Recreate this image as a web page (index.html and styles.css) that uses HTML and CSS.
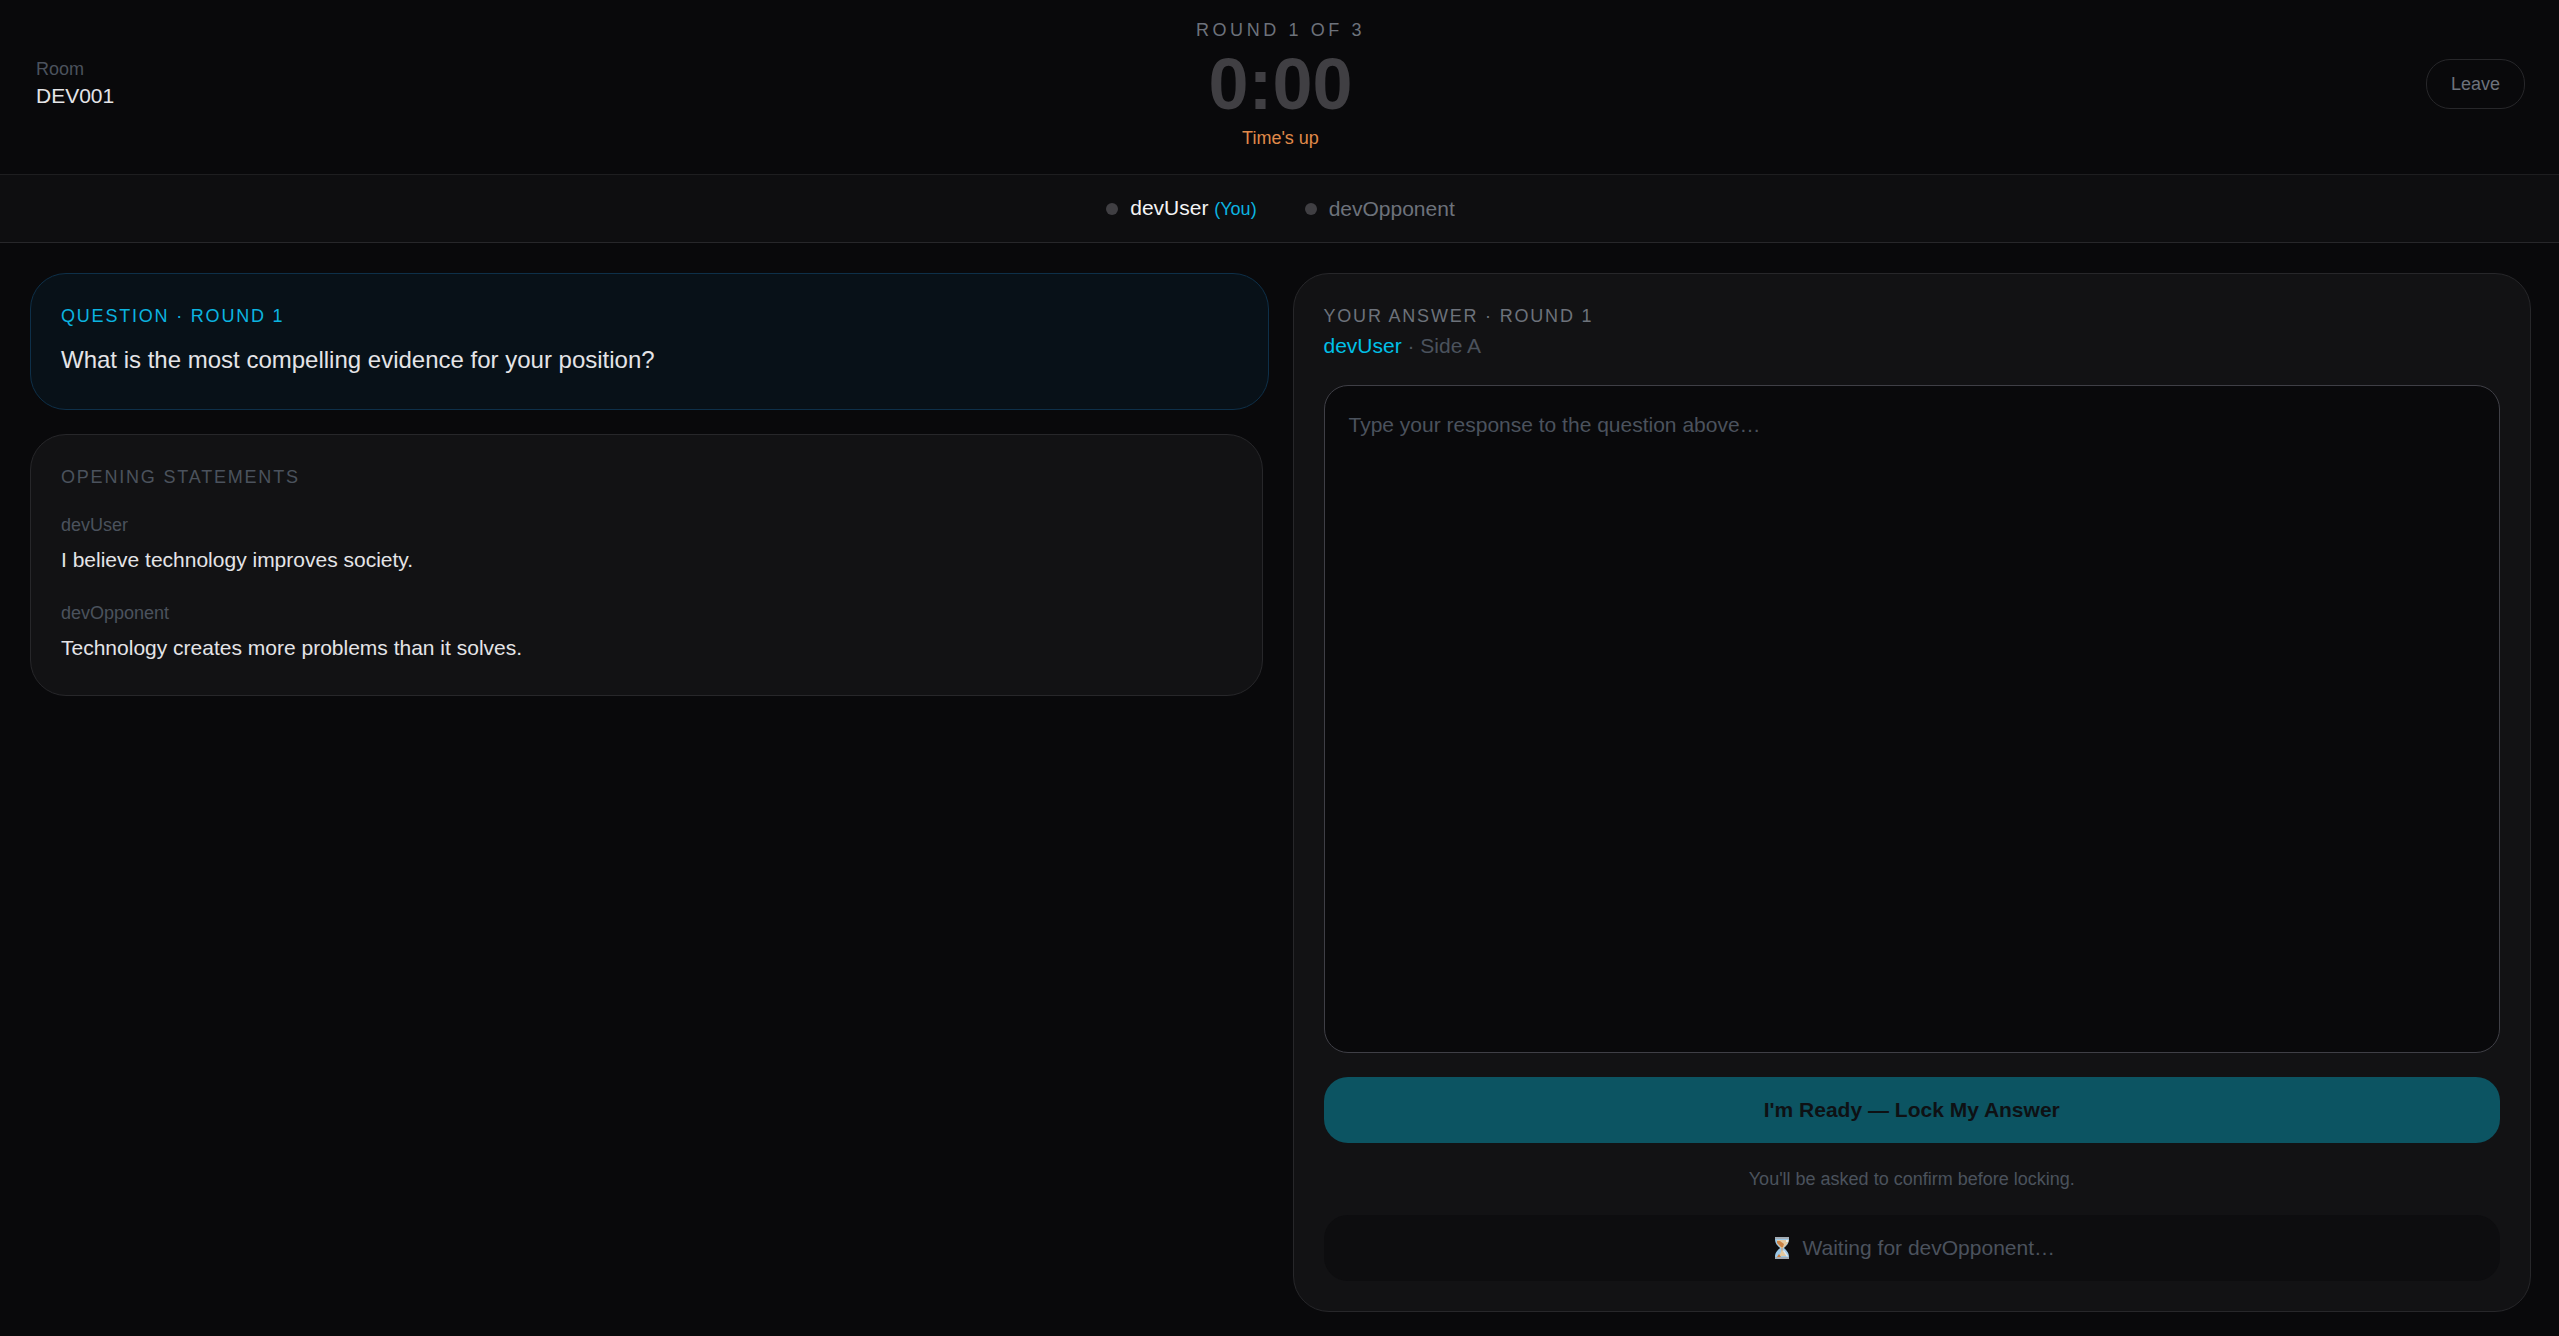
FILE: index.html
```html
<!DOCTYPE html>
<html lang="en">
<head>
    <meta charset="UTF-8">
    <meta name="viewport" content="width=device-width, initial-scale=1.0">
    <title>Debate Room DEV001</title>
    <link rel="stylesheet" href="styles.css">
</head>
<body>

<header class="topbar">
    <div class="room">
        <div class="small dim">Room</div>
        <div class="room-code">DEV001</div>
    </div>
    <div class="clock">
        <div class="round-label">Round 1 of 3</div>
        <div class="timer">0:00</div>
        <div class="time-up">Time's up</div>
    </div>
    <div class="topbar-right">
        <button type="button" class="leave-btn">Leave</button>
    </div>
</header>

<div class="players">
    <div class="player me">
        <span class="dot"></span>
        <span>devUser <span class="you">(You)</span></span>
    </div>
    <div class="player">
        <span class="dot"></span>
        <span>devOpponent</span>
    </div>
</div>

<main class="board">
    <div class="left">
        <section class="card question">
            <h2 class="label">Question · Round 1</h2>
            <p class="question-text">What is the most compelling evidence for your position?</p>
        </section>

        <div class="scroll-area">
            <section class="card statements">
                <h2 class="label">Opening Statements</h2>
                <div class="statement">
                    <div class="small dim">devUser</div>
                    <p>I believe technology improves society.</p>
                </div>
                <div class="statement">
                    <div class="small dim">devOpponent</div>
                    <p>Technology creates more problems than it solves.</p>
                </div>
            </section>
        </div>
    </div>

    <section class="card answer">
        <div class="answer-head">
            <label class="label" for="answer">Your Answer · Round 1</label>
            <p class="side"><span class="side-name">devUser</span> · Side A</p>
        </div>
        <textarea id="answer" placeholder="Type your response to the question above…"></textarea>
        <button type="button" class="ready-btn" disabled>I'm Ready — Lock My Answer</button>
        <p class="hint">You'll be asked to confirm before locking.</p>
        <div class="waiting">
            <svg class="hourglass" viewBox="-6 0 22 22" aria-hidden="true">
                <path d="M1 2h14c0 5-3 7-5 9 2 2 5 4 5 9H1c0-5 3-7 5-9-2-2-5-4-5-9z" fill="#9cc8e6"/>
                <path d="M3 3h12c-1 4-4 6-6 8H7C5 9 3 7 3 3z" fill="#e2c9a0"/>
                <path d="M3 4l3 0 4 3-1 3-2 0-4-4z" fill="#c98245"/>
                <path d="M8 10v5" stroke="#d59a62"/>
                <path d="M8 13l5 6H5z" fill="#e2c9a0"/>
                <path d="M10 13l4 6-1 1-4-6z" fill="#e4e8ec"/>
                <path d="M3 20l2-3 2 3z" fill="#c97834"/>
                <path d="M12 3h2v2h-2z" fill="#e8eef2"/>
                <path d="M1 0h14v2H1zM1 20h14v2H1z" fill="#a3abb3"/>
            </svg>
            <span>Waiting for devOpponent…</span>
        </div>
    </section>
</main>

</body>
</html>
```

FILE: styles.css
```css
* {
    box-sizing: border-box;
}

body {
    margin: 0;
    min-height: 100vh;
    display: flex;
    flex-direction: column;
    background-color: #09090b;
    color: #e4e4e7;
    font-family: Arial, "Liberation Sans", sans-serif;
    font-size: 21px;
    line-height: 30px;
}

h2, p {
    margin: 0;
    font-weight: normal;
}

button, textarea {
    font-family: inherit;
}

/* Top bar */
.topbar {
    display: grid;
    grid-template-columns: 1fr auto 1fr;
    align-items: center;
    padding: 18px 34px 24px 36px;
    border-bottom: 1px solid #1e1e20;
}

.small {
    font-size: 18px;
    line-height: 24px;
}

.dim {
    color: #4b525d;
}

.clock {
    text-align: center;
}

.round-label {
    font-size: 18px;
    line-height: 24px;
    letter-spacing: 0.2em;
    text-transform: uppercase;
    color: #6d727b;
}

.timer {
    margin-top: 6px;
    font-size: 72px;
    line-height: 72px;
    font-weight: bold;
    color: #403f43;
}

.time-up {
    margin-top: 6px;
    font-size: 18px;
    line-height: 24px;
    color: #e08a4a;
}

.topbar-right {
    text-align: right;
}

.leave-btn {
    padding: 12px 24px;
    border: 1px solid #27272a;
    border-radius: 24px;
    background: transparent;
    color: #6d727b;
    font-size: 18px;
    line-height: 24px;
    cursor: pointer;
}

/* Player strip */
.players {
    display: flex;
    justify-content: center;
    gap: 48px;
    padding: 18px 34px 18px 36px;
    background-color: #0e0e10;
    border-bottom: 1px solid #27272a;
}

.player {
    display: flex;
    align-items: center;
    gap: 12px;
    color: #6d727b;
}

.me {
    color: #f4f4f5;
}

.dot {
    width: 12px;
    height: 12px;
    border-radius: 50%;
    background-color: #403f43;
}

.you {
    font-size: 18px;
    color: #0bb4e0;
}

/* Board */
.board {
    flex: 1;
    display: grid;
    grid-template-columns: 1fr 1fr;
    gap: 24px;
    padding: 30px 28px 24px 30px;
}

.card {
    padding: 30px;
    border: 1px solid #27272a;
    border-radius: 36px;
    background-color: #121214;
}

.label {
    display: block;
    font-size: 18px;
    line-height: 24px;
    letter-spacing: 0.1em;
    text-transform: uppercase;
    color: #6d727b;
}

.left {
    display: flex;
    flex-direction: column;
    gap: 24px;
}

.question {
    background-color: #081118;
    border-color: #0e3049;
}

.question .label {
    color: #0bb4e0;
}

.question-text {
    margin-top: 12px;
    font-size: 24px;
    line-height: 39px;
}

.scroll-area {
    padding-right: 6px;
}

.statements .label {
    color: #4b525d;
}

.statement {
    margin-top: 24px;
}

.statement p {
    margin-top: 6px;
    line-height: 34px;
}

.answer {
    display: flex;
    flex-direction: column;
}

.side {
    margin-top: 3px;
    color: #4b525d;
}

.side-name {
    color: #00c0e8;
}

.answer textarea {
    flex: 1;
    width: 100%;
    margin-top: 24px;
    padding: 24px;
    border: 1px solid #3f3f46;
    border-radius: 24px;
    background-color: #09090b;
    color: #e4e4e7;
    font-size: 21px;
    line-height: 30px;
    resize: none;
}

.answer textarea::placeholder {
    color: #4b525d;
}

.ready-btn {
    margin-top: 24px;
    padding: 18px;
    border: none;
    border-radius: 24px;
    background-color: #0c5462;
    color: #0e1114;
    font-size: 21px;
    line-height: 30px;
    font-weight: bold;
}

.hint {
    margin-top: 24px;
    font-size: 18px;
    line-height: 24px;
    text-align: center;
    color: #4b525d;
}

.waiting {
    display: flex;
    justify-content: center;
    align-items: center;
    gap: 12px;
    margin-top: 24px;
    padding: 18px;
    border-radius: 24px;
    background-color: #0d0d0f;
    color: #4b525d;
}

.hourglass {
    width: 22px;
    height: 22px;
}

@media (max-width: 900px) {
    .board {
        grid-template-columns: 1fr;
    }

    .answer textarea {
        min-height: 300px;
    }
}
```
